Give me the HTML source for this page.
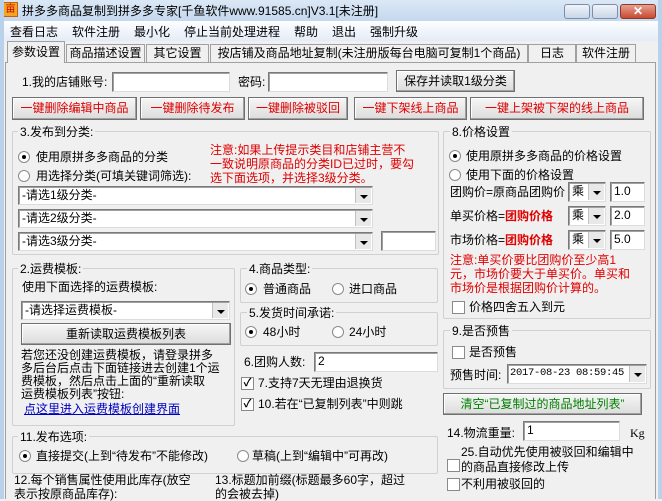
<!DOCTYPE html>
<html><head><meta charset="utf-8"><style>
*{box-sizing:border-box;margin:0;padding:0}
body{width:662px;height:499px;overflow:hidden;background:#f0f0f0;font:12px "Liberation Sans","Noto Sans CJK SC","WenQuanYi Zen Hei",sans-serif;color:#000;position:relative}
.a{position:absolute;white-space:nowrap;line-height:14px}
.win{position:absolute;left:0;top:0;width:662px;height:499px;border-left:4px solid #b9d1ea;border-right:4px solid #b9d1ea}
.title{position:absolute;left:0;top:0;width:662px;height:21px;background:linear-gradient(#dbe8f6,#c4d8ee)}
.menu{position:absolute;left:4px;top:21px;width:654px;height:20px;background:linear-gradient(#fdfeff,#e4ecf7)}
.panel{position:absolute;left:5px;top:62px;width:651px;height:437px;border:1px solid #a0a0a0;border-bottom:none;background:#f0f0f0}
.tab{position:absolute;top:44px;height:18px;border:1px solid #a0a0a0;border-bottom:none;background:#f0f0f0;text-align:center;line-height:16px}
.btn{position:absolute;border:1px solid #707070;background:linear-gradient(#f6f6f6,#dcdcdc);text-align:center;line-height:20px;box-shadow:inset -1px -1px #a0a0a0,inset 1px 1px #fff}
.red{color:#e00000}
.in{position:absolute;background:#fff;border:1px solid #7a7a7a;border-right-color:#dcdcdc;border-bottom-color:#dcdcdc;box-shadow:inset 1px 1px #a0a0a0;padding-left:3px;line-height:16px;font-size:12px;overflow:hidden}
.grp{position:absolute;border:1px solid #d0d0d0;border-radius:2px}
.gl{position:absolute;background:#f0f0f0;padding:0 2px;line-height:14px;white-space:nowrap}
.dd{position:absolute;right:1px;top:1px;width:16px;bottom:1px;background:#e8e8e8;border-left:1px solid #c0c0c0}
.dd:after{content:"";position:absolute;left:4px;top:7px;border:4px solid transparent;border-top:4px solid #000}
.rb{position:absolute;width:12px;height:12px;border-radius:50%;border:1px solid #8a8a8a;background:#fff}
.rb.on:after{content:"";position:absolute;left:3px;top:3px;width:4px;height:4px;border-radius:50%;background:#000}
.cb{position:absolute;width:13px;height:13px;border:1px solid #8a8a8a;background:#fff;font-size:11px;line-height:11px;text-align:center;font-weight:bold}
</style></head><body>
<div class="title"></div>
<div class="a" style="left:3px;top:2px;width:15px;height:15px;background:#f3a523;border:1px solid #c06010;color:#c00;font-size:10px;line-height:13px;text-align:center">亩</div>
<div class="a" style="left:22px;top:4px;font-size:12px">拼多多商品复制到拼多多专家[千鱼软件www.91585.cn]V3.1[未注册]</div>
<div class="a" style="left:564px;top:4px;width:26px;height:15px;border:1px solid #7d8ea6;border-radius:3px;background:linear-gradient(#f0f4fa,#c9d6e8)"></div>
<div class="a" style="left:592px;top:4px;width:26px;height:15px;border:1px solid #7d8ea6;border-radius:3px;background:linear-gradient(#f0f4fa,#c9d6e8)"></div>
<div class="a" style="left:620px;top:4px;width:36px;height:15px;border:1px solid #8a3a2a;border-radius:3px;background:linear-gradient(#e8a090,#c84a30);color:#fff;font-weight:bold;text-align:center;line-height:13px">✕</div>
<div class="menu"></div>
<div class="a" style="left:10px;top:25px">查看日志</div>
<div class="a" style="left:72px;top:25px">软件注册</div>
<div class="a" style="left:134px;top:25px">最小化</div>
<div class="a" style="left:184px;top:25px">停止当前处理进程</div>
<div class="a" style="left:294px;top:25px">帮助</div>
<div class="a" style="left:332px;top:25px">退出</div>
<div class="a" style="left:370px;top:25px">强制升级</div>
<div class="panel"></div>
<div class="tab" style="left:7px;top:41px;height:22px;width:58px;z-index:2;border-bottom:none;line-height:20px">参数设置</div>
<div class="tab" style="left:66px;width:79px">商品描述设置</div>
<div class="tab" style="left:146px;width:63px">其它设置</div>
<div class="tab" style="left:210px;width:318px">按店铺及商品地址复制(未注册版每台电脑可复制1个商品)</div>
<div class="tab" style="left:528px;width:48px">日志</div>
<div class="tab" style="left:576px;width:60px">软件注册</div>

<div class="a" style="left:22px;top:75px">1.我的店铺账号:</div>
<div class="in" style="left:112px;top:72px;width:118px;height:20px"></div>
<div class="a" style="left:238px;top:75px">密码:</div>
<div class="in" style="left:268px;top:72px;width:120px;height:20px"></div>
<div class="btn" style="left:396px;top:70px;width:119px;height:22px">保存并读取1级分类</div>

<div class="btn red" style="left:12px;top:97px;width:125px;height:23px">一键删除编辑中商品</div>
<div class="btn red" style="left:140px;top:97px;width:105px;height:23px">一键删除待发布</div>
<div class="btn red" style="left:248px;top:97px;width:100px;height:23px">一键删除被驳回</div>
<div class="btn red" style="left:354px;top:97px;width:113px;height:23px">一键下架线上商品</div>
<div class="btn red" style="left:470px;top:97px;width:174px;height:23px">一键上架被下架的线上商品</div>

<div class="grp" style="left:12px;top:131px;width:427px;height:124px"></div>
<div class="gl" style="left:18px;top:125px">3.发布到分类:</div>
<div class="rb on" style="left:18px;top:151px"></div><div class="a" style="left:36px;top:150px">使用原拼多多商品的分类</div>
<div class="rb" style="left:18px;top:170px"></div><div class="a" style="left:36px;top:169px">用选择分类(可填关键词筛选):</div>
<div class="a red" style="left:210px;top:143px">注意:如果上传提示类目和店铺主营不</div>
<div class="a red" style="left:210px;top:157px">一致说明原商品的分类ID已过时，要勾</div>
<div class="a red" style="left:210px;top:171px">选下面选项，并选择3级分类。</div>
<div class="in" style="left:18px;top:186px;width:355px;height:19px">-请选1级分类-<div class="dd"></div></div>
<div class="in" style="left:18px;top:209px;width:355px;height:19px">-请选2级分类-<div class="dd"></div></div>
<div class="in" style="left:18px;top:232px;width:355px;height:19px">-请选3级分类-<div class="dd"></div></div>
<div class="in" style="left:381px;top:231px;width:55px;height:20px"></div>

<div class="grp" style="left:443px;top:131px;width:208px;height:188px"></div>
<div class="gl" style="left:450px;top:125px">8.价格设置</div>
<div class="rb on" style="left:449px;top:150px"></div><div class="a" style="left:466px;top:149px">使用原拼多多商品的价格设置</div>
<div class="rb" style="left:449px;top:169px"></div><div class="a" style="left:466px;top:168px">使用下面的价格设置</div>
<div class="a" style="left:450px;top:185px">团购价=原商品团购价</div>
<div class="a" style="left:450px;top:209px">单买价格=<b class="red">团购价格</b></div>
<div class="a" style="left:450px;top:233px">市场价格=<b class="red">团购价格</b></div>
<div class="in" style="left:568px;top:182px;width:38px;height:20px">乘<div class="dd"></div></div>
<div class="in" style="left:568px;top:206px;width:38px;height:20px">乘<div class="dd"></div></div>
<div class="in" style="left:568px;top:230px;width:38px;height:20px">乘<div class="dd"></div></div>
<div class="in" style="left:610px;top:182px;width:35px;height:20px">1.0</div>
<div class="in" style="left:610px;top:206px;width:35px;height:20px">2.0</div>
<div class="in" style="left:610px;top:230px;width:35px;height:20px">5.0</div>
<div class="a red" style="left:450px;top:253px">注意:单买价要比团购价至少高1</div>
<div class="a red" style="left:450px;top:267px">元，市场价要大于单买价。单买和</div>
<div class="a red" style="left:450px;top:281px">市场价是根据团购价计算的。</div>
<div class="cb" style="left:452px;top:301px"></div><div class="a" style="left:469px;top:300px">价格四舍五入到元</div>

<div class="grp" style="left:12px;top:268px;width:223px;height:158px"></div>
<div class="gl" style="left:18px;top:262px">2.运费模板:</div>
<div class="a" style="left:22px;top:280px">使用下面选择的运费模板:</div>
<div class="in" style="left:21px;top:301px;width:209px;height:19px">-请选择运费模板-<div class="dd"></div></div>
<div class="btn" style="left:21px;top:323px;width:210px;height:22px">重新读取运费模板列表</div>
<div class="a" style="left:21px;top:349px;line-height:13px">若您还没创建运费模板，请登录拼多<br>多后台后点击下面链接进去创建1个运<br>费模板，然后点击上面的“重新读取<br>运费模板列表”按钮:</div>
<div class="a" style="left:24px;top:402px;color:#0000c0;text-decoration:underline">点这里进入运费模板创建界面</div>

<div class="grp" style="left:240px;top:268px;width:198px;height:35px"></div>
<div class="gl" style="left:247px;top:262px">4.商品类型:</div>
<div class="rb on" style="left:245px;top:283px"></div><div class="a" style="left:263px;top:282px">普通商品</div>
<div class="rb" style="left:332px;top:283px"></div><div class="a" style="left:349px;top:282px">进口商品</div>
<div class="grp" style="left:240px;top:312px;width:198px;height:34px"></div>
<div class="gl" style="left:247px;top:306px">5.发货时间承诺:</div>
<div class="rb on" style="left:245px;top:326px"></div><div class="a" style="left:263px;top:325px">48小时</div>
<div class="rb" style="left:332px;top:326px"></div><div class="a" style="left:349px;top:325px">24小时</div>
<div class="a" style="left:244px;top:355px">6.团购人数:</div>
<div class="in" style="left:314px;top:352px;width:124px;height:20px">2</div>
<div class="cb" style="left:241px;top:377px">✓</div><div class="a" style="left:258px;top:376px">7.支持7天无理由退换货</div>
<div class="cb" style="left:241px;top:398px">✓</div><div class="a" style="left:258px;top:397px">10.若在“已复制列表”中则跳</div>

<div class="grp" style="left:443px;top:330px;width:208px;height:59px"></div>
<div class="gl" style="left:450px;top:324px">9.是否预售</div>
<div class="cb" style="left:452px;top:346px"></div><div class="a" style="left:469px;top:345px">是否预售</div>
<div class="a" style="left:450px;top:368px">预售时间:</div>
<div class="in" style="left:507px;top:364px;width:140px;height:20px;font-family:'Liberation Mono',monospace;font-size:10.5px;letter-spacing:-0.3px;padding-left:2px">2017-08-23 08:59:45<div class="dd"></div></div>
<div class="btn" style="left:443px;top:393px;width:199px;height:22px;color:#008000">清空“已复制过的商品地址列表”</div>
<div class="a" style="left:447px;top:426px">14.物流重量:</div>
<div class="in" style="left:523px;top:421px;width:97px;height:20px">1</div>
<div class="a" style="left:630px;top:426px;font-family:'Liberation Serif',serif">Kg</div>
<div class="cb" style="left:447px;top:459px"></div><div class="a" style="left:461px;top:445px;line-height:15px">25.自动优先使用被驳回和编辑中<br>的商品直接修改上传</div>
<div class="cb" style="left:447px;top:478px"></div><div class="a" style="left:461px;top:477px">不利用被驳回的</div>

<div class="grp" style="left:12px;top:436px;width:426px;height:38px"></div>
<div class="gl" style="left:18px;top:430px">11.发布选项:</div>
<div class="rb on" style="left:19px;top:450px"></div><div class="a" style="left:36px;top:449px">直接提交(上到“待发布”不能修改)</div>
<div class="rb" style="left:237px;top:450px"></div><div class="a" style="left:252px;top:449px">草稿(上到“编辑中”可再改)</div>
<div class="a" style="left:14px;top:473px;line-height:14px">12.每个销售属性使用此库存(放空<br>表示按原商品库存):</div>
<div class="a" style="left:215px;top:473px;line-height:14px">13.标题加前缀(标题最多60字，超过<br>的会被去掉)</div>
<div class="win" style="pointer-events:none;border-top:none"></div>
</body></html>
